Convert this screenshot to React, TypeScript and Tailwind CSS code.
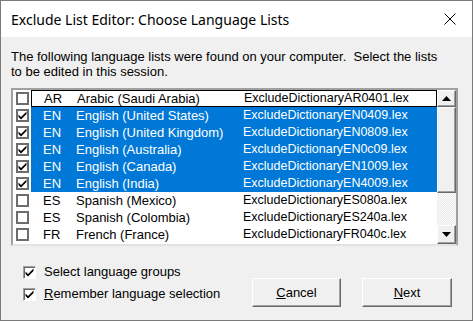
import React from 'react'

const ROWS = [
  { on: false, code: 'AR', name: 'Arabic (Saudi Arabia)', file: 'ExcludeDictionaryAR0401.lex', sel: false },
  { on: true, code: 'EN', name: 'English (United States)', file: 'ExcludeDictionaryEN0409.lex', sel: true },
  { on: true, code: 'EN', name: 'English (United Kingdom)', file: 'ExcludeDictionaryEN0809.lex', sel: true },
  { on: true, code: 'EN', name: 'English (Australia)', file: 'ExcludeDictionaryEN0c09.lex', sel: true },
  { on: true, code: 'EN', name: 'English (Canada)', file: 'ExcludeDictionaryEN1009.lex', sel: true },
  { on: true, code: 'EN', name: 'English (India)', file: 'ExcludeDictionaryEN4009.lex', sel: true },
  { on: false, code: 'ES', name: 'Spanish (Mexico)', file: 'ExcludeDictionaryES080a.lex', sel: false },
  { on: false, code: 'ES', name: 'Spanish (Colombia)', file: 'ExcludeDictionaryES240a.lex', sel: false },
  { on: false, code: 'FR', name: 'French (France)', file: 'ExcludeDictionaryFR040c.lex', sel: false },
]

function Tick() {
  return (
    <svg width="9" height="9" viewBox="0 0 9 9">
      <path d="M0.5 3.5 L3 6 L8.5 0.5 L8.5 3 L3 8.5 L0.5 6 Z" fill="#000" />
    </svg>
  )
}

// checkbox inside the list (flat, thick gray frame)
function ListBox({ on }: { on: boolean }) {
  return (
    <div className="flex size-[13px] items-center justify-center border-2 border-[#6d6d6d] bg-white">
      {on && <Tick />}
    </div>
  )
}

// classic sunken checkbox
function Check({ on }: { on: boolean }) {
  return (
    <div className="flex size-[13px] items-center justify-center border border-t-[#a0a0a0] border-l-[#a0a0a0] border-b-white border-r-white bg-white shadow-[inset_1px_1px_0_#696969]">
      {on && <Tick />}
    </div>
  )
}

function Arrow({ up }: { up: boolean }) {
  return (
    <svg width="9" height="5" viewBox="0 0 9 5">
      <path d={up ? 'M0 5 L4.5 0 L9 5 Z' : 'M0 0 L9 0 L4.5 5 Z'} fill="#000" />
    </svg>
  )
}

const raised =
  'border border-t-white border-l-white border-b-[#696969] border-r-[#696969] bg-[#f0f0f0] shadow-[inset_-1px_-1px_0_#a0a0a0]'

export default function App() {
  return (
    <div
      className="flex h-[321px] w-[473px] flex-col border border-[#7a7a7a] bg-[#f0f0f0] text-black"
      style={{ fontFamily: '"Liberation Sans", Arial, sans-serif' }}
    >
      {/* Title bar */}
      <div className="flex h-[36px] shrink-0 items-center justify-between bg-white pl-[10px] pr-[16px]">
        <span className="text-[14px]" style={{ fontFamily: '"Noto Sans", "Open Sans", sans-serif' }}>
          Exclude List Editor: Choose Language Lists
        </span>
        <svg width="12" height="12" viewBox="0 0 12 12">
          <path d="M0.5 0.5 L11.5 11.5 M11.5 0.5 L0.5 11.5" stroke="#000" strokeWidth="1" />
        </svg>
      </div>

      <div className="flex flex-1 flex-col px-[10px]">
        <p className="pt-[12px] text-[13px] leading-[15px]">
          The following language lists were found on your computer.&nbsp; Select the lists
          <br />
          to be edited in this session.
        </p>

        {/* List */}
        <div className="mt-[9px] flex h-[158px] w-[447px] border-2 border-t-[#a0a0a0] border-l-[#a0a0a0] border-b-[#e3e3e3] border-r-[#a0a0a0] bg-white">
          <div className="flex flex-1 flex-col text-[13px]">
            {ROWS.map((r, i) => (
              <div key={r.file} className="flex h-[17px] items-center">
                <div className="flex w-[18px] shrink-0 justify-end pr-[2px]">
                  <ListBox on={r.on} />
                </div>
                <div
                  className={
                    'flex h-full flex-1 items-center pl-[12px] ' +
                    (r.sel ? 'bg-[#0078d7] text-white ' : '') +
                    (i === 0 ? 'border border-black pl-[11px]' : '')
                  }
                >
                  <span className="w-[33px] shrink-0">{r.code}</span>
                  <span className="w-[167px] shrink-0">{r.name}</span>
                  <span className="text-[12.5px]">{r.file}</span>
                </div>
              </div>
            ))}
          </div>

          {/* Scrollbar */}
          <div className="flex w-[19px] shrink-0 flex-col bg-[#f0f0f0]">
            <div className={'flex h-[17px] items-center justify-center ' + raised}>
              <Arrow up />
            </div>
            <div className={'h-[86px] ' + raised} />
            <div className="flex-1 bg-[repeating-conic-gradient(#e6e6e6_0%_25%,#ffffff_0%_50%)] bg-[length:2px_2px]" />
            <div className={'flex h-[19px] items-center justify-center ' + raised}>
              <Arrow up={false} />
            </div>
          </div>
        </div>

        {/* Bottom */}
        <div className="flex flex-1">
          <div className="flex flex-1 flex-col pl-[12px] pt-[15px] text-[13px]">
            <label className="flex h-[22px] items-center gap-[8px]">
              <Check on />
              <span>
                Select lan<span className="underline">g</span>uage groups
              </span>
            </label>
            <label className="flex h-[22px] items-center gap-[8px]">
              <Check on />
              <span>
                <span className="underline">R</span>emember language selection
              </span>
            </label>
          </div>
          <div className="mr-[10px] flex items-end gap-[21px] pb-[13px] text-[13px]">
            <button className={'flex h-[29px] w-[89px] items-center justify-center ' + raised}>
              <span>
                <span className="underline">C</span>ancel
              </span>
            </button>
            <button className={'flex h-[29px] w-[90px] items-center justify-center ' + raised}>
              <span>
                <span className="underline">N</span>ext
              </span>
            </button>
          </div>
        </div>
      </div>
    </div>
  )
}
